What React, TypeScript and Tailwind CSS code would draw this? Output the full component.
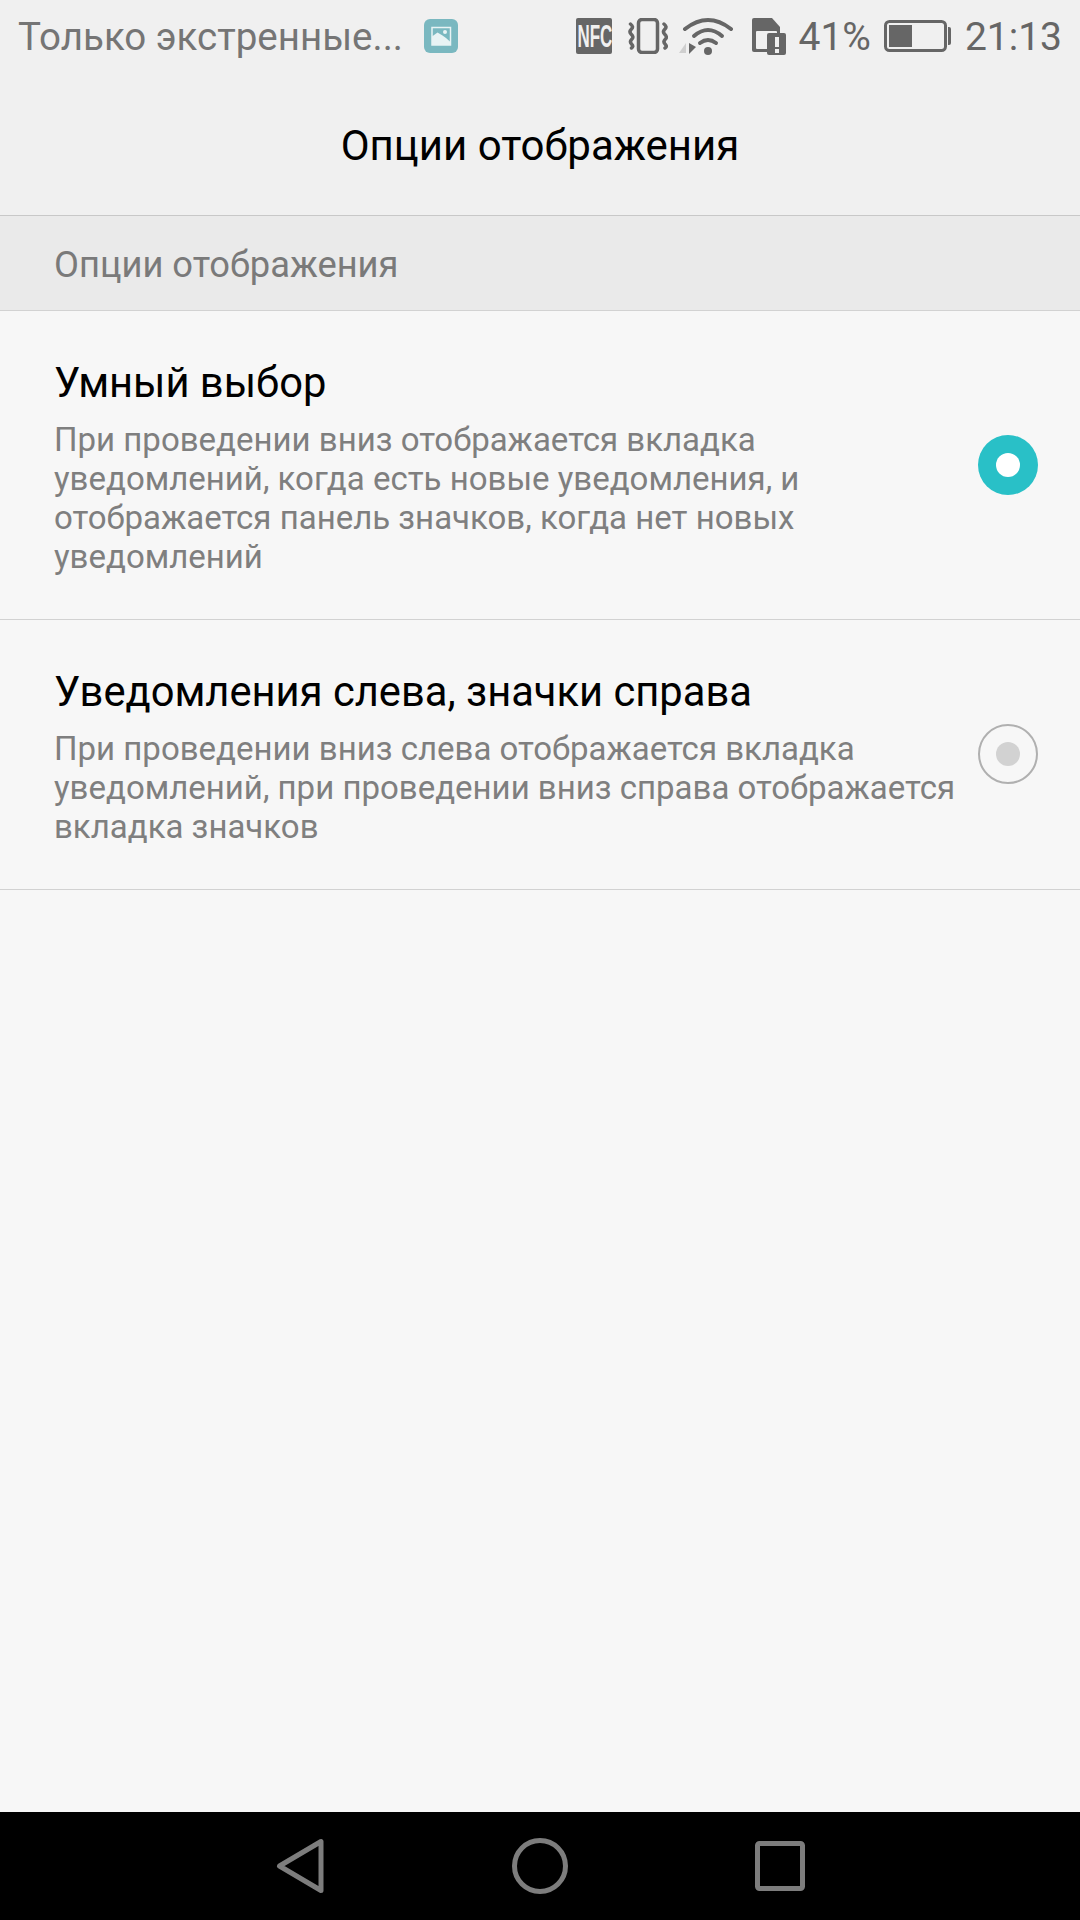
import React from "react";

const rows = [
  {
    title: "Умный выбор",
    lines: [
      "При проведении вниз отображается вкладка",
      "уведомлений, когда есть новые уведомления, и",
      "отображается панель значков, когда нет новых",
      "уведомлений",
    ],
    checked: true,
  },
  {
    title: "Уведомления слева, значки справа",
    lines: [
      "При проведении вниз слева отображается вкладка",
      "уведомлений, при проведении вниз справа отображается",
      "вкладка значков",
    ],
    checked: false,
  },
];

const GalleryIcon = () => (
  <svg width="34" height="34" viewBox="0 0 34 34" className="ml-[21px]">
    <rect width="34" height="34" rx="6" fill="#7ab8c0" />
    <rect x="8" y="8.500" width="18.500" height="17.500" fill="none" stroke="#e8f3f4" strokeWidth="1.500" />
    <path d="M8 17.500l5.500-4 5 3 3.500 2.500 4.500 4V26H8z" fill="#e8f3f4" />
    <circle cx="21" cy="13" r="2" fill="#e8f3f4" />
  </svg>
);

const NfcIcon = () => (
  <div className="w-[36px] h-[36px] rounded-[2px] bg-[#666666] flex items-center justify-center overflow-hidden">
    <span className="text-[#f0f0f0] text-[32px] leading-none font-['Liberation_Sans',sans-serif] font-bold scale-x-[0.53] whitespace-nowrap">
      NFC
    </span>
  </div>
);

const VibrateIcon = () => (
  <svg width="40" height="36" viewBox="0 0 40 36" fill="none" className="ml-[16px]">
    <rect x="10.500" y="1.500" width="19" height="33" rx="3.500" stroke="#666666" strokeWidth="3.500" />
    <path d="M2.500 6c2.500 2 2.500 3.500 1 5S1 14 3 16s2.500 3.500 1 5-2.500 3-.5 5 1.500 3 0 4" stroke="#666666" strokeWidth="3.500" strokeLinecap="round" />
    <path d="M36 6c2.500 2 2.500 3.500 1 5s-2.500 3-.5 5 2.500 3.500 1 5-2.500 3-.5 5 1.500 3 0 4" stroke="#666666" strokeWidth="3.500" strokeLinecap="round" />
  </svg>
);

const WifiIcon = () => (
  <svg width="56" height="40" viewBox="0 0 56 40" fill="none" className="ml-[11px]">
    <path d="M6 13Q29 -5 52 13" stroke="#666666" strokeWidth="4" strokeLinecap="round" />
    <path d="M15 20Q29 8 43 20" stroke="#666666" strokeWidth="4" strokeLinecap="round" />
    <path d="M21 27Q29 21 37 27" stroke="#666666" strokeWidth="4" strokeLinecap="round" />
    <circle cx="29" cy="35" r="4" fill="#666666" />
    <path d="M7 27v10H0z" fill="#cfcfcf" />
    <path d="M10 27v11l7-7z" fill="#666666" />
  </svg>
);

const SimAlertIcon = () => (
  <svg width="34" height="39" viewBox="0 0 34 39" fill="none" className="ml-[17px]">
    <path d="M2 1h18l8 9v25H2a2 2 0 0 1-2-2V3a2 2 0 0 1 2-2z" fill="#666666" />
    <rect x="4" y="14" width="21" height="18" rx="1" fill="#f0f0f0" />
    <rect x="15" y="16" width="19" height="22" rx="2" fill="#666666" />
    <rect x="23" y="20" width="4" height="10" fill="#f0f0f0" />
    <rect x="23" y="32" width="4" height="4" fill="#f0f0f0" />
  </svg>
);

const BatteryIcon = () => (
  <svg width="67" height="32" viewBox="0 0 67 32" fill="none" className="ml-[13px]">
    <rect x="1.500" y="1.500" width="60" height="29" rx="4" stroke="#666666" strokeWidth="3" />
    <rect x="5" y="5" width="23" height="22" fill="#666666" />
    <path d="M64 7h1a2 2 0 0 1 2 2v14a2 2 0 0 1-2 2h-1z" fill="#666666" />
  </svg>
);

function Radio({ checked }: { checked: boolean }) {
  if (checked) {
    return (
      <div className="w-[60px] h-[60px] mb-[2px] rounded-full bg-[#29c0c7] flex items-center justify-center shrink-0">
        <div className="w-[24px] h-[24px] rounded-full bg-white" />
      </div>
    );
  }
  return (
    <div className="w-[60px] h-[60px] mb-[2px] rounded-full border-2 border-[#b0b0b0] flex items-center justify-center shrink-0">
      <div className="w-[24px] h-[24px] rounded-full bg-[#d2d2d2]" />
    </div>
  );
}

export default function App() {
  return (
    <div className="w-[1080px] h-[1920px] flex flex-col bg-[#f7f7f7] font-['Roboto',sans-serif] overflow-hidden">
      {/* Status bar */}
      <div className="h-[72px] bg-[#f0f0f0] flex items-center pl-[18px] pr-[18px] shrink-0">
        <span className="text-[38.500px] leading-none text-[#757575] pt-[2px]">Только экстренные...</span>
        <GalleryIcon />
        <div className="ml-auto flex items-center">
          <NfcIcon />
          <VibrateIcon />
          <WifiIcon />
          <SimAlertIcon />
          <span className="ml-[12px] text-[39px] leading-none text-[#666666] pt-[2px]">41%</span>
          <BatteryIcon />
          <span className="ml-[14px] text-[39px] leading-none text-[#666666] pt-[2px]">21:13</span>
        </div>
      </div>
      {/* Title */}
      <div className="h-[144px] bg-[#f0f0f0] flex items-center justify-center border-b border-[#c8c8c8] shrink-0 pt-[5px]">
        <span className="text-[42px] leading-none text-black">Опции отображения</span>
      </div>
      {/* Section header */}
      <div className="h-[95px] bg-[#eaeaea] flex items-center pl-[54px] border-b border-[#d2d2d2] shrink-0 pt-[4px]">
        <span className="text-[36.300px] leading-none text-[#7a7a7a]">Опции отображения</span>
      </div>
      {/* Options */}
      {rows.map((row) => (
        <div key={row.title} className="flex items-center pl-[54px] pr-[42px] pt-[44px] pb-[43px] border-b border-[#d2d2d2]">
          <div className="flex-1">
            <div className="text-[41.700px] leading-[56px] text-black mb-[9px]">{row.title}</div>
            <div className="text-[33px] leading-[39px] text-[#7f7f7f] whitespace-nowrap">
              {row.lines.map((l) => (
                <div key={l}>{l}</div>
              ))}
            </div>
          </div>
          <Radio checked={row.checked} />
        </div>
      ))}
      <div className="flex-1" />
      {/* Navigation bar */}
      <div className="h-[108px] bg-black flex items-center justify-center shrink-0">
        <div className="flex items-center gap-[187px]">
          <svg width="49" height="56" viewBox="0 0 49 56" fill="none">
            <path d="M45 3.500v49L3.500 28z" stroke="#7d7d7d" strokeWidth="5" strokeLinejoin="round" />
          </svg>
          <svg width="56" height="56" viewBox="0 0 56 56" fill="none">
            <circle cx="28" cy="28" r="25.500" stroke="#7d7d7d" strokeWidth="5" />
          </svg>
          <svg width="50" height="50" viewBox="0 0 50 50" fill="none">
            <rect x="2.500" y="2.500" width="45" height="45" rx="2" stroke="#7d7d7d" strokeWidth="5" />
          </svg>
        </div>
      </div>
    </div>
  );
}
